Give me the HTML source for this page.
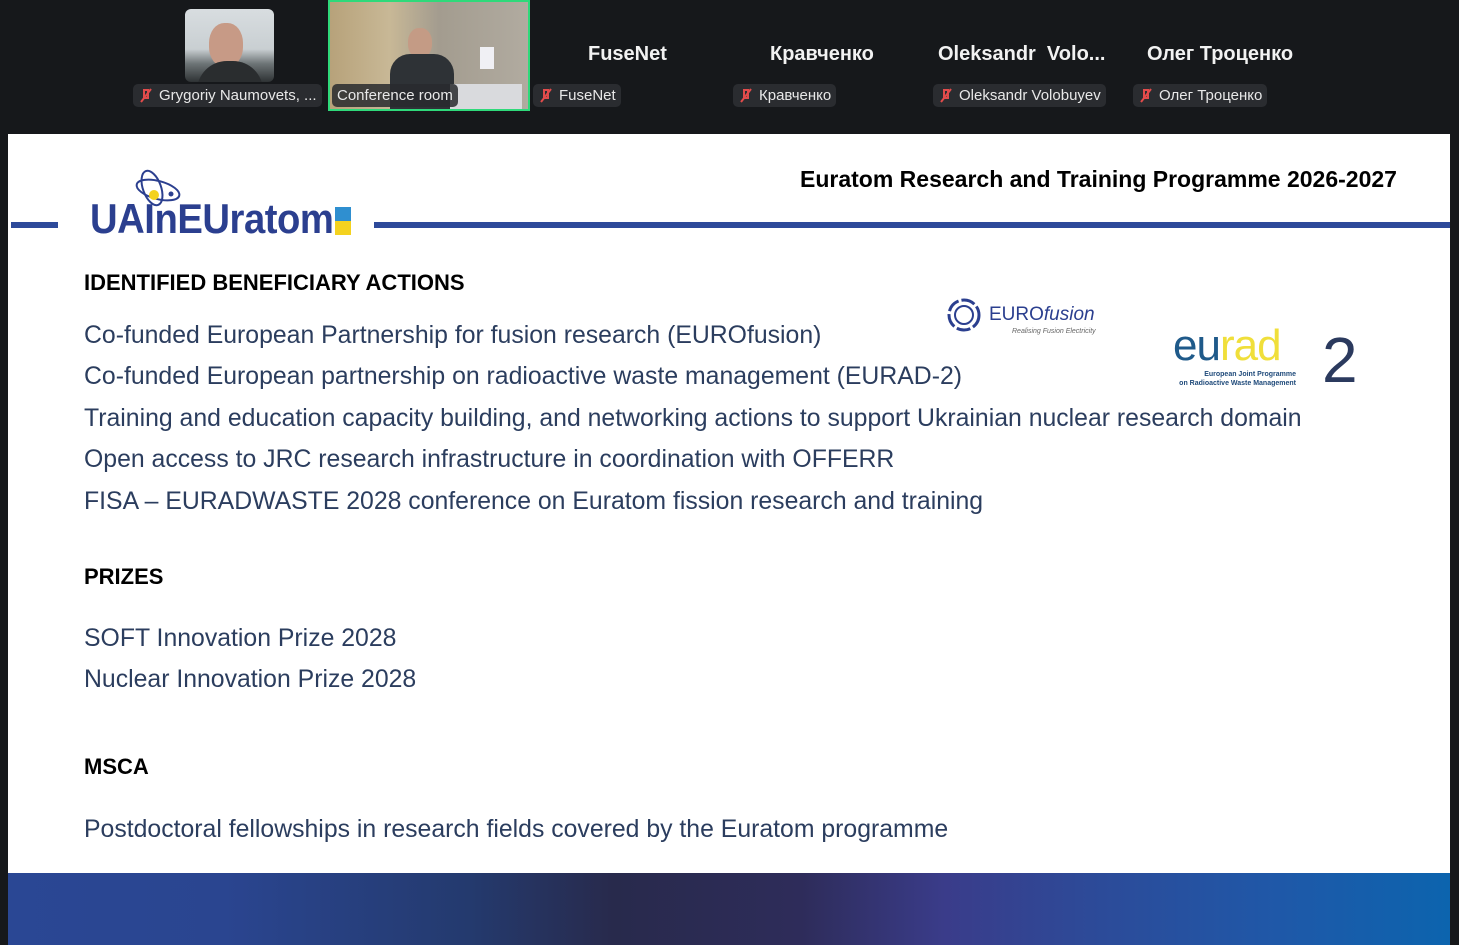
<!DOCTYPE html>
<html><head><meta charset="utf-8"><style>
*{margin:0;padding:0;box-sizing:border-box}
body{width:1459px;height:945px;background:#16181b;position:relative;overflow:hidden;font-family:"Liberation Sans","DejaVu Sans",sans-serif}
.abs{position:absolute}
.lbl{position:absolute;top:84px;height:23px;background:#2a2c30;border-radius:5px;color:#e8e8e8;font-size:15px;line-height:23px;padding:0 5px 0 26px;white-space:nowrap}
.lbl svg{position:absolute;left:6px;top:4px}
.name{position:absolute;top:43px;color:#f2f2f2;font-weight:bold;font-size:20px;white-space:nowrap}
.slide{position:absolute;left:8px;top:134px;width:1442px;height:811px;background:#fff}
.t{position:absolute;left:84px;color:#2b3d5e;font-size:24.8px;white-space:nowrap}
.h{position:absolute;left:84px;color:#000;font-weight:bold;font-size:22px;white-space:nowrap}
</style></head><body>
<div class="abs" style="left:185px;top:9px;width:89px;height:73px;border-radius:6px;background:linear-gradient(180deg,#d8dde0 0%,#c9cfd2 55%,#6d7476 75%,#2e3234 100%);overflow:hidden">
<div class="abs" style="left:24px;top:14px;width:34px;height:44px;border-radius:45%;background:#c79a86"></div>
<div class="abs" style="left:12px;top:52px;width:66px;height:30px;border-radius:30px 30px 0 0;background:#2a2d2f"></div>
</div>
<div class="abs" style="left:328px;top:0;width:202px;height:111px;border:2px solid #2fd97a;background:linear-gradient(90deg,#b7a27a 0%,#c8b896 30%,#a39c8f 55%,#b1aba0 100%);overflow:hidden">
<div class="abs" style="left:78px;top:26px;width:24px;height:30px;border-radius:45%;background:#c49b85"></div>
<div class="abs" style="left:60px;top:52px;width:64px;height:60px;border-radius:20px 20px 0 0;background:#2e3236"></div>
<div class="abs" style="left:150px;top:45px;width:14px;height:22px;background:#f0f0f4"></div>
<div class="abs" style="left:120px;top:82px;width:72px;height:30px;background:#d9dadd"></div>
</div>
<div class="lbl" style="left:133px">
<svg width="14" height="16" viewBox="0 0 14 16"><path d="M5 2h4v8H5z M2 14L12 1" stroke="#e24b4b" stroke-width="2" fill="none"/></svg>Grygoriy Naumovets, ...</div>
<div class="lbl" style="left:332px;padding-left:5px;background:rgba(40,42,46,.85)">Conference room</div>
<div class="lbl" style="left:533px"><svg width="14" height="16" viewBox="0 0 14 16"><path d="M5 2h4v8H5z M2 14L12 1" stroke="#e24b4b" stroke-width="2" fill="none"/></svg>FuseNet</div>
<div class="lbl" style="left:733px"><svg width="14" height="16" viewBox="0 0 14 16"><path d="M5 2h4v8H5z M2 14L12 1" stroke="#e24b4b" stroke-width="2" fill="none"/></svg>Кравченко</div>
<div class="lbl" style="left:933px"><svg width="14" height="16" viewBox="0 0 14 16"><path d="M5 2h4v8H5z M2 14L12 1" stroke="#e24b4b" stroke-width="2" fill="none"/></svg>Oleksandr Volobuyev</div>
<div class="lbl" style="left:1133px"><svg width="14" height="16" viewBox="0 0 14 16"><path d="M5 2h4v8H5z M2 14L12 1" stroke="#e24b4b" stroke-width="2" fill="none"/></svg>Олег Троценко</div>
<div class="name" style="left:588px">FuseNet</div>
<div class="name" style="left:770px">Кравченко</div>
<div class="name" style="left:938px">Oleksandr&nbsp; Volo...</div>
<div class="name" style="left:1147px">Олег Троценко</div>

<div class="slide">
<div class="abs" style="left:3px;top:88px;width:47px;height:6px;background:#2d4a9a"></div>
<div class="abs" style="left:366px;top:88px;width:1076px;height:6px;background:#2d4a9a"></div>
<svg class="abs" style="left:122px;top:34px" width="56" height="50" viewBox="0 0 56 50"><ellipse cx="22" cy="20" rx="9" ry="18" transform="rotate(-20 22 20)" fill="none" stroke="#2b3f8f" stroke-width="2"/><ellipse cx="28" cy="22" rx="22" ry="9" transform="rotate(15 28 22)" fill="none" stroke="#2b3f8f" stroke-width="2"/><circle cx="24" cy="27" r="5" fill="#f4d21f"/><circle cx="41" cy="26" r="2.5" fill="#2b3f8f"/></svg>
<div class="abs" style="left:82px;top:61px;color:#2b3f8f;font-size:42px;font-weight:bold;font-family:'Liberation Sans Narrow','Liberation Sans',sans-serif;transform:scaleX(0.91);transform-origin:left;letter-spacing:-0.5px;white-space:nowrap">UAInEUratom</div>
<div class="abs" style="left:327px;top:73px;width:16px;height:14px;background:#2f8fd0"></div>
<div class="abs" style="left:327px;top:87px;width:16px;height:14px;background:#f4d21f"></div>
<div class="abs" style="left:792px;top:32px;font-size:23px;font-weight:bold;color:#000">Euratom Research and Training Programme 2026-2027</div>

<div class="h" style="top:136px;left:76px">IDENTIFIED BENEFICIARY ACTIONS</div>
<div class="t" style="top:188px;left:76px">Co-funded European Partnership for fusion research (EUROfusion)</div>
<div class="t" style="top:229px;left:76px">Co-funded European partnership on radioactive waste management (EURAD-2)</div>
<div class="t" style="top:271px;left:76px">Training and education capacity building, and networking actions to support Ukrainian nuclear research domain</div>
<div class="t" style="top:312px;left:76px">Open access to JRC research infrastructure in coordination with OFFERR</div>
<div class="t" style="top:354px;left:76px">FISA – EURADWASTE 2028 conference on Euratom fission research and training</div>
<div class="h" style="top:430px;left:76px">PRIZES</div>
<div class="t" style="top:491px;left:76px">SOFT Innovation Prize 2028</div>
<div class="t" style="top:532px;left:76px">Nuclear Innovation Prize 2028</div>
<div class="h" style="top:620px;left:76px">MSCA</div>
<div class="t" style="top:682px;left:76px">Postdoctoral fellowships in research fields covered by the Euratom programme</div>

<svg class="abs" style="left:938px;top:163px" width="36" height="36" viewBox="0 0 36 36"><circle cx="18" cy="18" r="15" fill="none" stroke="#2b3f8f" stroke-width="3" stroke-dasharray="14 3"/><circle cx="18" cy="18" r="9" fill="none" stroke="#2b3f8f" stroke-width="2"/></svg>
<div class="abs" style="left:981px;top:170px;color:#2b3f8f;font-size:19px">EURO<i>fusion</i></div>
<div class="abs" style="left:1004px;top:194px;color:#666;font-size:7px;font-style:italic">Realising Fusion Electricity</div>
<div class="abs" style="left:1165px;top:190px;font-size:44px;line-height:44px;letter-spacing:-1px"><span style="color:#1f5a8a">eu</span><span style="color:#f0df3a">rad</span></div>
<div class="abs" style="left:1166px;top:236px;font-size:7px;line-height:9px;color:#1f4a7a;font-weight:bold;text-align:right;width:122px">European Joint Programme<br>on Radioactive Waste Management</div>
<div class="abs" style="left:1314px;top:194px;font-size:64px;line-height:64px;color:#2b3a5e">2</div>

<div class="abs" style="left:0;top:739px;width:1442px;height:72px;background:linear-gradient(90deg,#2a4794 0%,#2a4590 15%,#243a6e 32%,#282a4c 42%,#2e2c5a 55%,#3a3c8a 65%,#2d4a98 75%,#1f58a8 88%,#0c64ae 100%)"></div>
</div>
</body></html>
